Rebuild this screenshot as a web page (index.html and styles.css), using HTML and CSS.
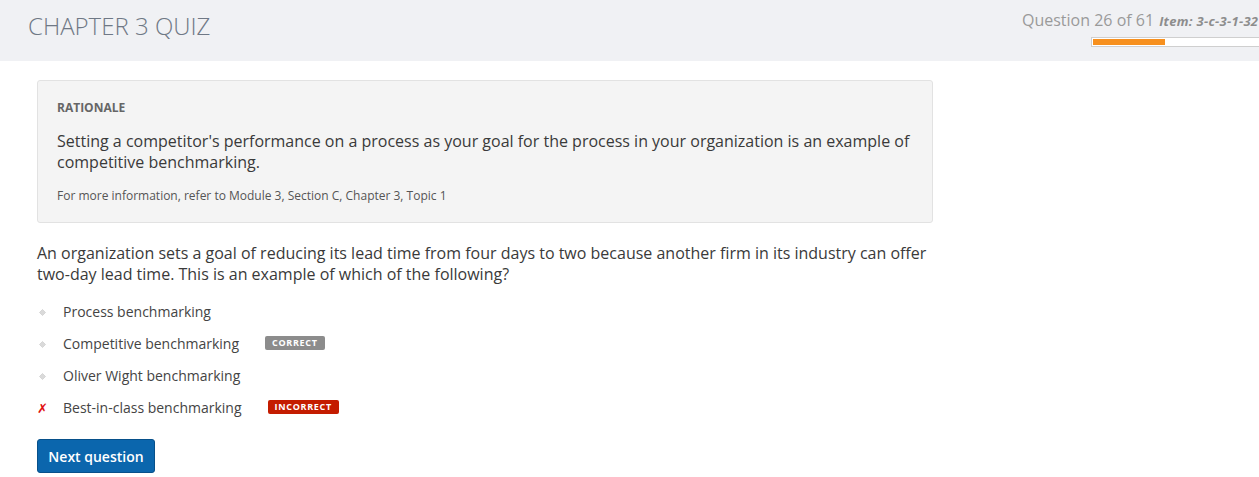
FILE: index.html
```html
<!DOCTYPE html>
<html>
<head>
<meta charset="utf-8">
<link rel="stylesheet" href="styles.css">
</head>
<body>
<header class="header">
  <h1 class="title">CHAPTER 3 QUIZ</h1>
  <div class="status">
    <div class="status-top">
      <span class="qcount">Question 26 of 61</span>
      <span class="item">Item: 3-c-3-1-32</span>
    </div>
    <div class="progress"><div class="progress-fill" style="width:72px"></div></div>
  </div>
</header>
<main class="main">
  <section class="rationale">
    <div class="rationale-label">RATIONALE</div>
    <p class="rationale-text">Setting a competitor's performance on a process as your goal for the process in your organization is an example of competitive benchmarking.</p>
    <p class="rationale-ref">For more information, refer to Module 3, Section C, Chapter 3, Topic 1</p>
  </section>
  <p class="question">An organization sets a goal of reducing its lead time from four days to two because another firm in its industry can offer two-day lead time. This is an example of which of the following?</p>
  <ul class="options">
    <li class="option"><span class="mark"><svg width="7" height="7" viewBox="0 0 7 7"><path d="M3.5 0.5 L6.5 3.5 L3.5 6.5 L0.5 3.5 Z" fill="#dadada" stroke="#c8c8c8" stroke-width="0.6"/></svg></span><span class="opt-text">Process benchmarking</span></li>
    <li class="option"><span class="mark"><svg width="7" height="7" viewBox="0 0 7 7"><path d="M3.5 0.5 L6.5 3.5 L3.5 6.5 L0.5 3.5 Z" fill="#dadada" stroke="#c8c8c8" stroke-width="0.6"/></svg></span><span class="opt-text">Competitive benchmarking</span><span class="badge badge-correct">CORRECT</span></li>
    <li class="option"><span class="mark"><svg width="7" height="7" viewBox="0 0 7 7"><path d="M3.5 0.5 L6.5 3.5 L3.5 6.5 L0.5 3.5 Z" fill="#dadada" stroke="#c8c8c8" stroke-width="0.6"/></svg></span><span class="opt-text">Oliver Wight benchmarking</span></li>
    <li class="option"><span class="mark mark-x">✗</span><span class="opt-text">Best-in-class benchmarking</span><span class="badge badge-incorrect">INCORRECT</span></li>
  </ul>
  <button class="next-btn">Next question</button>
</main>
</body>
</html>
```
FILE: styles.css
```css
* { box-sizing: border-box; }
html, body { margin: 0; padding: 0; }
body {
  font-family: "Open Sans", "Liberation Sans", sans-serif;
  color: #333;
  background: #fff;
  width: 1259px;
  height: 477px;
  overflow: hidden;
}
.header {
  height: 61px;
  background: #f0f1f4;
  display: flex;
  justify-content: space-between;
  align-items: flex-start;
  padding-left: 28px;
}
.title {
  margin: 10px 0 0 0;
  font-size: 24px;
  font-weight: 300;
  color: #6f7885;
  line-height: 32px;
}
.status {
  width: 237px;
  padding-top: 9px;
  display: flex;
  flex-direction: column;
  align-items: flex-end;
}
.status-top {
  width: 237px;
  display: flex;
  align-items: baseline;
  white-space: nowrap;
  overflow: hidden;
}
.qcount {
  font-size: 16px;
  color: #9a9a9a;
  line-height: 22px;
  flex: none;
}
.item {
  margin-left: 5px;
  font-size: 13px;
  font-style: italic;
  font-weight: 700;
  color: #8d8d8d;
  letter-spacing: 0.3px;
  flex: none;
}
.progress {
  margin-top: 6px;
  width: 168px;
  height: 10px;
  background: #fff;
  border: 1px solid #cfcfcf;
  border-right: none;
  padding: 1px 0 1px 1px;
}
.progress-fill {
  height: 100%;
  background: #f7901e;
}
.main {
  padding: 19px 0 0 37px;
  width: 933px;
}
.rationale {
  background: #f4f4f4;
  border: 1px solid #e2e2e2;
  border-radius: 3px;
  padding: 19px 19px 18px 19px;
  height: 143px;
}
.rationale-label {
  font-size: 12px;
  font-weight: 700;
  color: #666;
  line-height: 16px;
}
.rationale-text {
  margin: 15px 0 0 0;
  font-size: 16px;
  line-height: 21px;
  color: #3a3a3a;
}
.rationale-ref {
  margin: 15px 0 0 0;
  font-size: 12px;
  line-height: 16px;
  color: #555;
}
.question {
  margin: 20px 0 0 0;
  font-size: 16px;
  line-height: 21px;
  color: #3a3a3a;
  width: 900px;
}
.options {
  list-style: none;
  margin: 11px 0 0 0;
  padding: 0;
}
.option {
  display: flex;
  align-items: center;
  height: 32px;
  font-size: 14px;
  color: #444;
}
.mark {
  width: 26px;
  display: flex;
  align-items: center;
  padding-left: 2px;
}
.mark-x {
  color: #e01010;
  font-size: 13px;
  font-weight: 700;
  font-family: "DejaVu Sans", sans-serif;
  padding-left: 0;
}
.opt-text {
  line-height: 20px;
}
.badge {
  margin-left: 26px;
  height: 14px;
  padding: 0 7px;
  border-radius: 2px;
  color: #fff;
  font-size: 9px;
  font-weight: 700;
  letter-spacing: 0.7px;
  line-height: 14px;
  margin-top: -2px;
}
.badge-correct { background: #8c8c8c; }
.badge-incorrect { background: #c41c00; }
.next-btn {
  margin-top: 15px;
  width: 118px;
  height: 34px;
  background: #0b66ad;
  border: 1px solid #07508a;
  border-radius: 3px;
  color: #fff;
  font-family: "Open Sans", "Liberation Sans", sans-serif;
  font-size: 14px;
  font-weight: 600;
  padding: 0;
}
```
